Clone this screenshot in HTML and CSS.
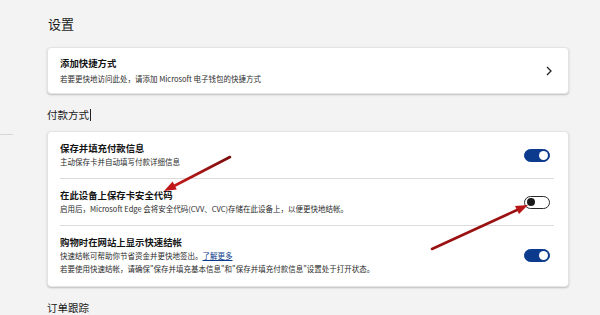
FILE: index.html
```html
<!DOCTYPE html>
<html lang="zh-CN">
<head>
    <meta charset="UTF-8">
    <meta name="viewport" content="width=device-width, initial-scale=1.0">
    <title>设置</title>
    <link rel="stylesheet" href="styles.css">
</head>
<body>
    <div class="page">
        <!-- sidebar edge -->
        <div class="side"><div class="side-line"></div></div>

        <div class="main">
            <h1 class="page-title">设置</h1>

            <!-- Shortcut card -->
            <div class="card card-link">
                <div class="row-text">
                    <div class="row-title">添加快捷方式</div>
                    <div class="row-sub">若要更快地访问此处，请添加 Microsoft 电子钱包的快捷方式</div>
                </div>
                <svg class="chevron" width="8" height="10" viewBox="0 0 8 10">
                    <path d="M2 1 L6 5 L2 9" fill="none" stroke="#222" stroke-width="1.3"/>
                </svg>
            </div>

            <h2 class="section-title">付款方式<span class="caret"></span></h2>

            <!-- Payment card -->
            <div class="card card-list">
                <div class="row">
                    <div class="row-text">
                        <div class="row-title">保存并填充付款信息</div>
                        <div class="row-sub">主动保存卡并自动填写付款详细信息</div>
                    </div>
                    <span class="toggle on"></span>
                </div>
                <div class="row">
                    <div class="row-text">
                        <div class="row-title">在此设备上保存卡安全代码</div>
                        <div class="row-sub">启用后，Microsoft Edge 会将安全代码(CVV、CVC)存储在此设备上，以便更快地结帐。</div>
                    </div>
                    <span class="toggle"></span>
                </div>
                <div class="row row-tall">
                    <div class="row-text">
                        <div class="row-title">购物时在网站上显示快速结帐</div>
                        <div class="row-sub">快速结帐可帮助你节省资金并更快地签出。<a href="#" class="link">了解更多</a></div>
                        <div class="row-sub">若要使用快速结帐，请确保"保存并填充基本信息"和"保存并填充付款信息"设置处于打开状态。</div>
                    </div>
                    <span class="toggle on"></span>
                </div>
            </div>

            <h2 class="section-title">订单跟踪</h2>
        </div>
    </div>

    <!-- annotation arrows drawn over the screenshot -->
    <svg class="arrows" width="600" height="315" viewBox="0 0 600 315">
        <defs>
            <linearGradient id="red1" x1="1" y1="0" x2="0" y2="1">
                <stop offset="0" stop-color="#7a0d0d"/>
                <stop offset="1" stop-color="#c41a1a"/>
            </linearGradient>
        </defs>
        <line x1="230" y1="157" x2="175" y2="185.5" stroke="url(#red1)" stroke-width="2.6" stroke-linecap="round"/>
        <polygon points="164,191 176.8,189.5 172.6,181.5" fill="#c01818"/>
        <line x1="432" y1="249" x2="517" y2="210" stroke="#9a1111" stroke-width="2.6" stroke-linecap="round"/>
        <polygon points="528,205 519,214 515,206" fill="#b81616"/>
    </svg>
</body>
</html>
```

FILE: styles.css
```css
body {
    margin: 0;
    width: 600px;
    height: 315px;
    overflow: hidden;
    background-color: #f3f3f3;
    font-family: "Noto Sans CJK SC", "Noto Sans", sans-serif;
    color: #1b1b1b;
    position: relative;
}
.page {
    display: flex;
}
.side {
    width: 13px;
    padding-top: 134px;
}
.side-line {
    height: 1px;
    background: #d6d6d6;
}
.main {
    margin-left: 34px;
    width: 522px;
}
.page-title {
    font-size: 13px;
    line-height: 18px;
    font-weight: normal;
    margin: 15px 0 0 1px;
}
.section-title {
    font-size: 10.5px;
    line-height: 14px;
    font-weight: normal;
    margin: 14px 0 9px 0;
    display: flex;
    align-items: center;
}
.caret {
    display: inline-block;
    width: 1px;
    height: 12px;
    background: #222;
    margin-left: 1px;
}
.card {
    background: #fff;
    border: 1px solid #e4e4e4;
    border-radius: 4px;
    box-shadow: 0 1px 2px rgba(0, 0, 0, 0.22);
    box-sizing: border-box;
}
.card-link {
    margin-top: 14px;
    height: 47px;
    display: flex;
    align-items: center;
    justify-content: space-between;
    padding: 0 15px 0 12px;
}
.card-link .row-text {
    margin-top: 1px;
}
.row-title {
    font-size: 9.4px;
    line-height: 13px;
    font-weight: bold;
    color: #141414;
}
.card-link .row-sub {
    margin-top: 2px;
}
.row-sub {
    font-size: 7.5px;
    line-height: 13px;
    color: #2b2b2b;
}
.link {
    color: #0b3a8a;
    text-decoration: underline;
}
.card-list {
    padding: 0 14px 0 12px;
}
.row {
    display: flex;
    align-items: center;
    justify-content: space-between;
    padding: 10px 4px 10px 0;
}
.row + .row {
    border-top: 1px solid #dcdcdc;
}
.row-tall {
    padding-bottom: 11px;
}
.toggle {
    width: 26px;
    height: 13px;
    border-radius: 7px;
    box-sizing: border-box;
    border: 1px solid #2a2a2a;
    background: #fff;
    position: relative;
    flex-shrink: 0;
}
.toggle::after {
    content: "";
    position: absolute;
    top: 1.5px;
    left: 2px;
    width: 8px;
    height: 8px;
    border-radius: 50%;
    background: #1a1a1a;
}
.toggle.on {
    background: #0c3a8c;
    border-color: #0c3a8c;
}
.toggle.on::after {
    left: auto;
    right: 1.5px;
    top: 1px;
    width: 9px;
    height: 9px;
    background: #fff;
}
.arrows {
    position: absolute;
    left: 0;
    top: 0;
    pointer-events: none;
}
```
